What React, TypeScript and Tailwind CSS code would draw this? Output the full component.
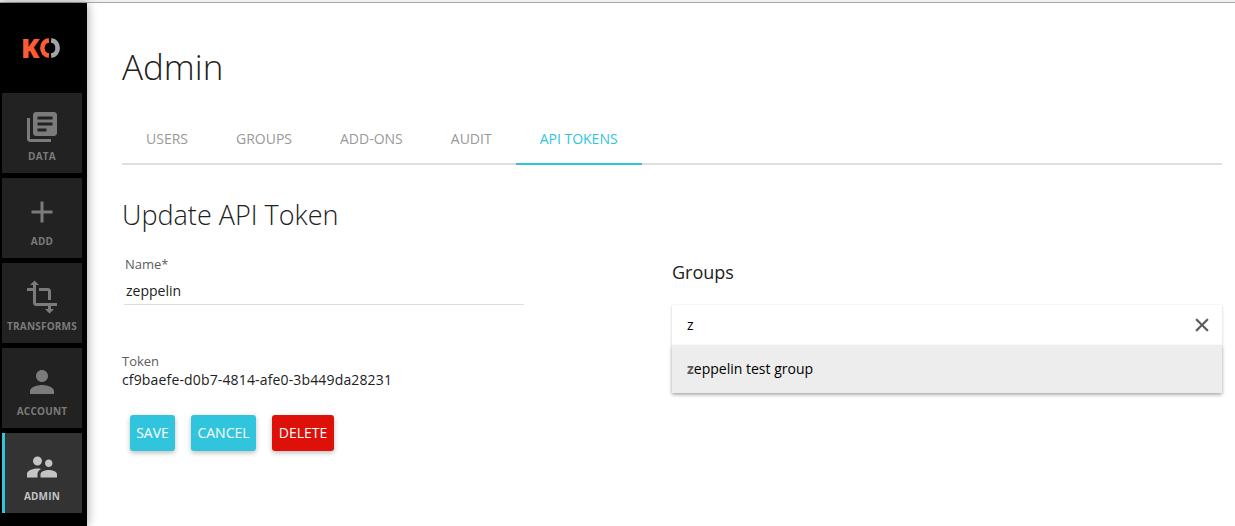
import React from 'react';

const icons = {
  data: 'M4 6H2v14c0 1.1.9 2 2 2h14v-2H4V6zm16-4H8c-1.1 0-2 .9-2 2v12c0 1.1.9 2 2 2h12c1.1 0 2-.9 2-2V4c0-1.1-.9-2-2-2zm-1 9H9V9h10v2zm-4 4H9v-2h6v2zm4-8H9V5h10v2z',
  add: 'M19 13h-6v6h-2v-6H5v-2h6V5h2v6h6v2z',
  transforms:
    'M22 18v-2H8V4h2L7 1 4 4h2v2H2v2h4v8c0 1.1.9 2 2 2h8v2h-2l3 3 3-3h-2v-2h4zM10 8h6v6h2V8c0-1.1-.9-2-2-2h-6v2z',
  account:
    'M12 12c2.21 0 4-1.79 4-4s-1.79-4-4-4-4 1.79-4 4 1.79 4 4 4zm0 2c-2.67 0-8 1.34-8 4v2h16v-2c0-2.66-5.33-4-8-4z',
  admin:
    'M16.5 12c1.38 0 2.49-1.12 2.49-2.5S17.88 7 16.5 7C15.12 7 14 8.12 14 9.5s1.12 2.5 2.5 2.5zM9 11c1.66 0 2.99-1.34 2.99-3S10.66 5 9 5C7.34 5 6 6.34 6 8s1.34 3 3 3zm7.5 3c-1.83 0-5.5.92-5.5 2.75V19h11v-2.25c0-1.83-3.67-2.75-5.5-2.75zM9 13c-2.33 0-7 1.17-7 3.5V19h7v-2.25c0-.85.33-2.34 2.37-3.47C10.5 13.1 9.66 13 9 13z',
  close:
    'M19 6.41L17.59 5 12 10.59 6.41 5 5 6.41 10.59 12 5 17.59 6.41 19 12 13.41 17.59 19 19 17.59 13.41 12z',
};

function Icon({ name, className }: { name: keyof typeof icons; className: string }) {
  return (
    <svg viewBox="0 0 24 24" className={className} fill="currentColor" aria-hidden="true">
      <path d={icons[name]} />
    </svg>
  );
}

function NavItem({ name, label, active = false }: { name: keyof typeof icons; label: string; active?: boolean }) {
  return (
    <a
      className={`flex h-20 w-20 flex-col items-center pt-4 ${
        active ? 'border-l-[3px] border-[#31c5dd] bg-[#333333] pr-[3px] text-[#c4c4c4]' : 'bg-[#222222] text-[#7b7b7b]'
      }`}
    >
      <Icon name={name} className="size-9 shrink-0" />
      <span className="mt-1 text-[10px] leading-[14px] font-bold tracking-[0.2px] whitespace-nowrap">{label}</span>
    </a>
  );
}

function Logo() {
  return (
    <div className="flex h-[90px] items-center pl-[21px]">
      <span className="w-[18px] text-[27px] leading-[26px] font-extrabold text-[#ff5a36]">K</span>
      <svg width="22" height="20" viewBox="0 0 22 20" fill="none" strokeWidth="4.6" aria-hidden="true">
        <path d="M9.9 2.4C1.2 3.2 1.2 16.8 9.9 17.6" stroke="#ff5a36" />
        <path d="M12.1 2.4C20.8 3.2 20.8 16.8 12.1 17.6" stroke="#a0a4a6" />
      </svg>
    </div>
  );
}

function Tab({ label, active = false }: { label: string; active?: boolean }) {
  return (
    <a
      className={`flex h-[50px] items-center border-b-2 px-6 pb-0.5 text-[14px] ${
        active ? 'border-[#31c5dd] text-[#31c5dd]' : 'border-transparent text-[#999999]'
      }`}
    >
      {label}
    </a>
  );
}

function Button({ label, className }: { label: string; className: string }) {
  return (
    <button
      className={`h-9 rounded-[3px] pb-px text-[14px] text-white shadow-[0_2px_5px_0_rgba(0,0,0,0.26)] ${className}`}
    >
      {label}
    </button>
  );
}

export default function App() {
  return (
    <div className="flex h-[526px] w-[1235px] flex-col overflow-hidden bg-white font-['Open_Sans',sans-serif] text-[#212121]">
      <div className="h-[3px] shrink-0 border-b border-[#a9a9a9] bg-[#f0f0f0]" />
      <div className="flex min-h-0 flex-1">
        <nav className="w-[87px] shrink-0 bg-black shadow-[0_0_10px_rgba(0,0,0,0.4)]">
          <Logo />
          <div className="flex flex-col gap-[5px] pl-0.5">
            <NavItem name="data" label="DATA" />
            <NavItem name="add" label="ADD" />
            <NavItem name="transforms" label="TRANSFORMS" />
            <NavItem name="account" label="ACCOUNT" />
            <NavItem name="admin" label="ADMIN" active />
          </div>
        </nav>

        <main className="flex-1 pr-[13px] pl-[35px]">
          <h1 className="pt-[39px] text-[35px] leading-[50px] font-light">Admin</h1>
          <div className="mt-[23px] flex h-[50px] shadow-[inset_0_-2px_0_#dedede]">
            <Tab label="USERS" />
            <Tab label="GROUPS" />
            <Tab label="ADD-ONS" />
            <Tab label="AUDIT" />
            <Tab label="API TOKENS" active />
          </div>

          <div className="flex">
            <section className="w-[550px]">
              <h2 className="pt-[31px] text-[27px] leading-[38px] font-light">Update API Token</h2>
              <div className="mt-[21px] ml-0.5 w-[400px] border-b border-[#dcdcdc]">
                <label className="block pl-px text-[13px] leading-[18px] text-[#5c5c5c]">Name*</label>
                <div className="mt-1 h-[27px] pt-1 pl-0.5 text-[14px] leading-5">zeppelin</div>
              </div>
              <div className="mt-[47px]">
                <div className="text-[13px] leading-[18px] text-[#5c5c5c]">Token</div>
                <div className="text-[14px] leading-5 tracking-[0.15px]">cf9baefe-d0b7-4814-afe0-3b449da28231</div>
              </div>
              <div className="mt-[25px] flex gap-4 pl-2">
                <Button label="SAVE" className="w-[45px] bg-[#31c5dd]" />
                <Button label="CANCEL" className="w-[65px] bg-[#31c5dd]" />
                <Button label="DELETE" className="w-[62px] bg-[#dd100a]" />
              </div>
            </section>

            <section className="w-[550px] pt-[95px]">
              <h3 className="text-[18px] leading-6">Groups</h3>
              <div className="mt-[21px] shadow-[0_1px_3px_rgba(0,0,0,0.2)]">
                <div className="flex h-10 items-center justify-between bg-white pr-[9px] pb-px pl-[15px] text-[14px] text-black">
                  <span>z</span>
                  <Icon name="close" className="size-[22px] stroke-current stroke-[0.4] text-[#555555]" />
                </div>
                <div className="flex h-12 items-center bg-[#ededed] pb-0.5 pl-[15px] text-[14px] text-black shadow-[0_2px_4px_rgba(0,0,0,0.22)]">
                  <span className="font-bold text-[#5c5c5c]">z</span>
                  <span>eppelin test group</span>
                </div>
              </div>
            </section>
          </div>
        </main>
      </div>
    </div>
  );
}
